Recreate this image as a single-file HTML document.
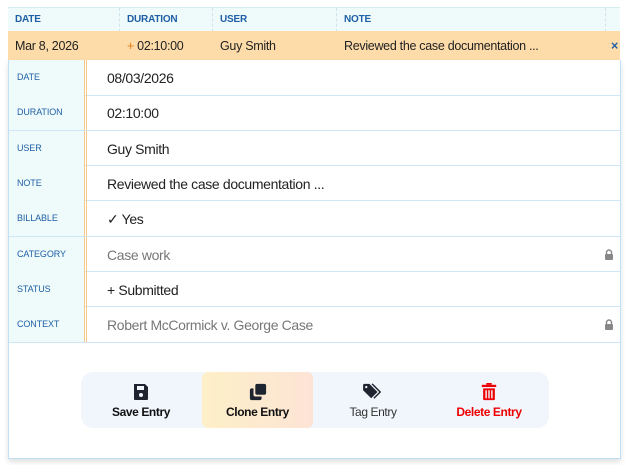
<!DOCTYPE html>
<html><head><style>
*{margin:0;padding:0;box-sizing:border-box}
body{width:629px;height:465px;background:#fff;font-family:"Liberation Sans",sans-serif;position:relative;overflow:hidden}
.abs{position:absolute}
.hdr{left:8px;top:7px;width:612px;height:24px;background:#effbfa;border-top:1px solid #d5eef0}
.hc{position:absolute;top:0;height:24px;line-height:23px;font-size:10px;font-weight:bold;color:#1f5fa6;padding-left:7px;border-right:1px dashed #cfe3ea;letter-spacing:-.2px}
.sel{left:8px;top:31px;width:612px;height:29px;background:#fddcaa}
.sc{position:absolute;top:0;line-height:31px;font-size:12.5px;color:#222;padding-left:7px;letter-spacing:-.3px}
.panel{left:8px;top:60px;width:613px;height:399px;border:1px solid #bfe0f5;border-top:none;box-shadow:0 3px 5px rgba(0,0,0,.12)}
.row{position:absolute;left:0;width:611px;height:35.5px;border-bottom:1px solid #cfe6f7}
.lab{position:absolute;left:0;top:0;width:75px;height:35px;background:#effbfa;font-size:9px;color:#1f5fa6;line-height:35px;padding-left:8px;letter-spacing:-.1px}
.bar{position:absolute;left:75px;top:0;width:3px;height:35px;border-left:1px solid #f6c98a;border-right:1px solid #f6c98a}
.val{position:absolute;left:98px;top:0;line-height:36px;font-size:14px;color:#222;letter-spacing:-.35px}
.grey{color:#777}
.lock{position:absolute;right:6px;top:12px;width:10px;height:11px}
.btns{left:81px;top:372px;width:468px;height:56px;background:#f1f6fd;border-radius:12px}
.b{position:absolute;top:0;height:56px;text-align:center;font-size:12px;color:#111;letter-spacing:-.4px;font-weight:bold}
.b svg{display:block;margin:11px auto 4px}
</style></head><body>
<div class="abs hdr">
<div class="hc" style="left:0;width:112px">DATE</div>
<div class="hc" style="left:112px;width:93px">DURATION</div>
<div class="hc" style="left:205px;width:124px">USER</div>
<div class="hc" style="left:329px;width:269px">NOTE</div>
</div>
<div class="abs sel">
<div class="sc" style="left:0">Mar 8, 2026</div>
<div class="sc" style="left:112px"><span style="color:#e57d14">+</span> 02:10:00</div>
<div class="sc" style="left:205px">Guy Smith</div>
<div class="sc" style="left:329px">Reviewed the case documentation ...</div>
<div class="sc" style="left:596px;color:#1f5fa6;font-weight:bold">×</div>
</div>
<div class="abs panel">
<div class="row" style="top:0"><div class="lab">DATE</div><div class="bar"></div><div class="val">08/03/2026</div></div>
<div class="row" style="top:35.3px"><div class="lab">DURATION</div><div class="bar"></div><div class="val">02:10:00</div></div>
<div class="row" style="top:70.6px"><div class="lab">USER</div><div class="bar"></div><div class="val">Guy Smith</div></div>
<div class="row" style="top:105.9px"><div class="lab">NOTE</div><div class="bar"></div><div class="val">Reviewed the case documentation ...</div></div>
<div class="row" style="top:141.2px"><div class="lab">BILLABLE</div><div class="bar"></div><div class="val">✓ Yes</div></div>
<div class="row" style="top:176.5px"><div class="lab">CATEGORY</div><div class="bar"></div><div class="val grey">Case work</div>
<svg class="lock" viewBox="0 0 10 11"><path d="M2.5 5V3.5a2.5 2.5 0 0 1 5 0V5" fill="none" stroke="#888" stroke-width="1.4"/><rect x="1" y="5" width="8" height="6" rx="1" fill="#888"/></svg></div>
<div class="row" style="top:211.8px"><div class="lab">STATUS</div><div class="bar"></div><div class="val">+ Submitted</div></div>
<div class="row" style="top:247.1px"><div class="lab">CONTEXT</div><div class="bar"></div><div class="val grey">Robert McCormick v. George Case</div>
<svg class="lock" viewBox="0 0 10 11"><path d="M2.5 5V3.5a2.5 2.5 0 0 1 5 0V5" fill="none" stroke="#888" stroke-width="1.4"/><rect x="1" y="5" width="8" height="6" rx="1" fill="#888"/></svg></div>
</div>
<div class="abs btns">
<div class="b" style="left:15px;width:90px">
<svg width="16" height="18" viewBox="0 0 16 18"><path d="M1 1h11l3 3v12a1 1 0 0 1-1 1H2a1 1 0 0 1-1-1z" fill="#1e2530"/><rect x="4" y="3" width="7" height="4" fill="#f1f6fd"/><circle cx="8" cy="12" r="2" fill="#f1f6fd"/></svg>Save Entry</div>
<div class="b" style="left:121px;width:111px;border-radius:6px;background:linear-gradient(90deg,#fdf0c8,#fde3d5)">
<svg width="20" height="18" viewBox="0 0 20 20"><rect x="7" y="1" width="12" height="12" rx="2" fill="#1e2530"/><path d="M5 6H3a2 2 0 0 0-2 2v9a2 2 0 0 0 2 2h9a2 2 0 0 0 2-2v-2H7a2 2 0 0 1-2-2z" fill="#1e2530"/></svg>Clone Entry</div>
<div class="b" style="left:247px;width:90px;color:#333;font-weight:normal">
<svg width="24" height="18" viewBox="0 0 24 20"><path d="M1 2v6l9 9 7-7-9-9H2z" fill="#1e2530"/><circle cx="4.5" cy="4.5" r="1.3" fill="#f1f6fd"/><path d="M11 1l9 9-7 7" fill="none" stroke="#1e2530" stroke-width="1.6"/></svg>Tag Entry</div>
<div class="b" style="left:363px;width:90px;color:#e00">
<svg width="16" height="18" viewBox="0 0 16 20"><rect x="0" y="2" width="16" height="2.5" fill="#e00"/><rect x="5" y="0" width="6" height="2" fill="#e00"/><path d="M1.5 6h13v12a1 1 0 0 1-1 1h-11a1 1 0 0 1-1-1z" fill="#e00"/><rect x="4" y="8" width="1.6" height="9" fill="#f1f6fd"/><rect x="7.2" y="8" width="1.6" height="9" fill="#f1f6fd"/><rect x="10.4" y="8" width="1.6" height="9" fill="#f1f6fd"/></svg>Delete Entry</div>
</div>
</body></html>
